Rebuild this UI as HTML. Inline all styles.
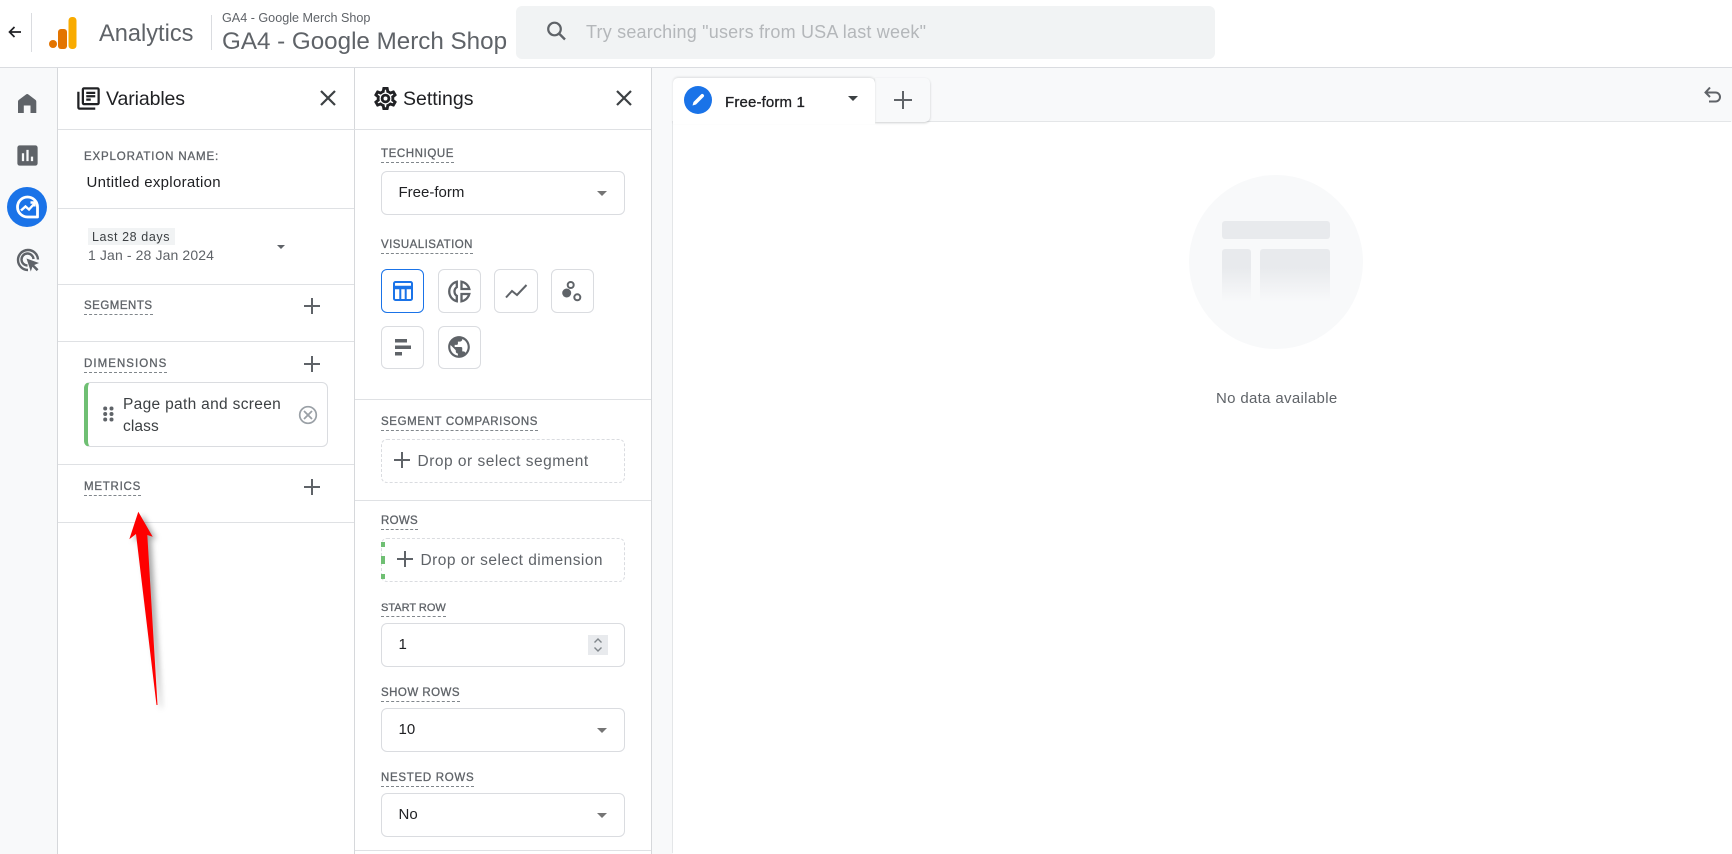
<!DOCTYPE html>
<html lang="en"><head><meta charset="utf-8"><title>Analytics</title>
<style>
html,body{margin:0;padding:0;width:1732px;height:854px;overflow:hidden;background:#fff;font-family:"Liberation Sans",Arial,sans-serif}
.a{position:absolute}
.t{position:absolute;white-space:nowrap;line-height:20px;height:20px}
.l{position:absolute;white-space:nowrap;font-size:11.5px;line-height:14px;height:14px;padding-bottom:1px;color:#5f6368;border-bottom:1px dashed #80868b;-webkit-text-stroke:.3px #5f6368}
.h{position:absolute;height:1px;background:#dfe1e4}
.v{position:absolute;width:1px;background:#d6d8db}
.box{position:absolute;box-sizing:border-box;border:1px solid #dadce0;border-radius:6px;background:#fff}
.dash{border:1px dashed #dadce0}
.sel{font-size:15px;color:#202124}
.ar{position:absolute;width:0;height:0;border-left:5.5px solid transparent;border-right:5.5px solid transparent;border-top:5.5px solid #757575}
svg{position:absolute;display:block}
</style></head><body>

<!-- Header -->
<svg style="left:6px;top:23px" width="18" height="18" viewBox="0 0 18 18"><path d="M15 9H4M8.500 4 3.500 9l5 5" fill="none" stroke="#202124" stroke-width="1.700"/></svg>
<div class="v" style="left:31px;top:13px;height:39px;background:#dadce0"></div>
<svg style="left:49px;top:17px" width="28" height="32" viewBox="0 0 28 32"><circle cx="4" cy="27" r="4" fill="#e37400"/><rect x="9" y="12" width="9" height="20" rx="3" fill="#e37400"/><rect x="19.500" y="0" width="8" height="32" rx="3.500" fill="#f9ab00"/></svg>
<div class="t" style="left:99px;top:24px;font-size:23.600px;color:#5f6368">Analytics</div>
<div class="v" style="left:211px;top:15px;height:35px;background:#dadce0"></div>
<div class="t" style="left:222px;top:8px;font-size:12.600px;color:#5f6368">GA4 - Google Merch Shop</div>
<div class="t" style="left:222px;top:32px;font-size:24.200px;color:#5f6368">GA4 - Google Merch Shop</div>
<div class="a" style="left:516px;top:6px;width:699px;height:53px;background:#f1f3f4;border-radius:6px"></div>
<svg style="left:544px;top:19px" width="24" height="24" viewBox="0 0 24 24"><circle cx="10.500" cy="10" r="6.300" fill="none" stroke="#5f6368" stroke-width="2.200"/><path d="M15 14.500l6 6" stroke="#5f6368" stroke-width="2.400"/></svg>
<div class="t" style="left:586px;top:22px;font-size:18px;letter-spacing:.2px;color:#b4b7ba">Try searching "users from USA last week"</div>
<div class="h" style="left:0;top:67px;width:1732px;height:1px;background:#dadce0"></div>

<!-- Rail -->
<div class="a" style="left:0;top:68px;width:57px;height:786px;background:#f8f9fa"></div>
<div class="v" style="left:57px;top:68px;height:786px"></div>
<svg style="left:0;top:68px" width="57" height="60" viewBox="0 68 57 60"><path fill="#5f6368" d="M18 113V101.500Q18 100.500 19 99.800L26 94.500Q27.200 93.600 28.400 94.500L35.300 99.800Q36.300 100.500 36.300 101.500V113H30.500V105.500H23.800V113z"/></svg>
<svg style="left:14px;top:142px" width="27" height="27" viewBox="0 0 24 24"><path fill="#5f6368" d="M19 3H5c-1.100 0-2 .9-2 2v14c0 1.100.9 2 2 2h14c1.100 0 2-.9 2-2V5c0-1.100-.9-2-2-2zM9 17H7v-7h2v7zm4 0h-2V7h2v10zm4 0h-2v-4h2v4z"/></svg>
<div class="a" style="left:7px;top:187px;width:40px;height:40px;border-radius:50%;background:#1a73e8"></div>
<svg style="left:7px;top:187px" width="40" height="40" viewBox="0 0 40 40"><path d="M30.500 20a10 10 0 1 0-10 10H30.500z" fill="none" stroke="#fff" stroke-width="2.800" stroke-linejoin="round"/><path d="M14 23.500l4.500-4 3.500 3 5-5.500M23.500 15.500H27.500V19.500" fill="none" stroke="#fff" stroke-width="2.400"/></svg>
<svg style="left:16px;top:248px" width="24" height="24" viewBox="0 0 24 24"><path d="M12 22A10 10 0 1 1 22 11.500" fill="none" stroke="#5f6368" stroke-width="2.400"/><path d="M11.500 17.500A6 6 0 1 1 17.500 11" fill="none" stroke="#5f6368" stroke-width="2.400"/><path d="M10.500 10.500 23 15l-4.800 2 4.300 4.300-1.800 1.800-4.300-4.300-1.600 4.700z" fill="#5f6368"/></svg>

<!-- Panels -->
<div class="v" style="left:354px;top:68px;height:786px"></div>
<div class="v" style="left:651px;top:68px;height:786px"></div>

<!-- Variables -->
<svg style="left:75px;top:85px" width="27" height="27" viewBox="0 0 24 24"><path fill="#202124" d="M4 6H2v14c0 1.100.9 2 2 2h14v-2H4V6zm16-4H8c-1.100 0-2 .9-2 2v12c0 1.100.9 2 2 2h12c1.100 0 2-.9 2-2V4c0-1.100-.9-2-2-2zm0 14H8V4h12v12zM10 9h8v2h-8zm0 3h4v2h-4zm0-6h8v2h-8z"/></svg>
<div class="t" style="left:106px;top:89px;font-size:19.500px;letter-spacing:-.1px;color:#202124">Variables</div>
<svg style="left:320px;top:90px" width="16" height="16" viewBox="0 0 16 16"><path d="M1 1l14 14M15 1 1 15" stroke="#3c4043" stroke-width="2.200"/></svg>
<div class="h" style="left:58px;top:129px;width:593px"></div>
<div class="t" style="left:84px;top:147px;font-size:11.500px;letter-spacing:.85px;color:#5f6368;-webkit-text-stroke:.3px #5f6368">EXPLORATION NAME:</div>
<div class="t" style="left:86.500px;top:173px;font-size:15px;letter-spacing:.3px;color:#202124">Untitled exploration</div>
<div class="h" style="left:58px;top:208px;width:296px"></div>
<div class="a" style="left:88px;top:228px;width:87px;height:17px;background:#f1f3f4"></div>
<div class="t" style="left:92px;top:227px;font-size:12.500px;letter-spacing:.6px;color:#3c4043">Last 28 days</div>
<div class="t" style="left:88px;top:245px;font-size:14px;letter-spacing:.12px;color:#5f6368">1 Jan - 28 Jan 2024</div>
<div class="ar" style="left:277px;top:245px;border-left-width:4.500px;border-right-width:4.500px;border-top-width:4.500px;border-top-color:#5f6368"></div>
<div class="h" style="left:58px;top:284px;width:296px"></div>
<div class="l" style="left:84px;top:299px;letter-spacing:.5px">SEGMENTS</div>
<svg style="left:304px;top:298px" width="16" height="16" viewBox="0 0 16 16"><path d="M8 0v16M0 8h16" stroke="#5f6368" stroke-width="2"/></svg>
<div class="h" style="left:58px;top:341px;width:296px"></div>
<div class="l" style="left:84px;top:357px;letter-spacing:1.05px">DIMENSIONS</div>
<svg style="left:304px;top:356px" width="16" height="16" viewBox="0 0 16 16"><path d="M8 0v16M0 8h16" stroke="#5f6368" stroke-width="2"/></svg>
<div class="box" style="left:84px;top:382px;width:244px;height:65px;border-left:4px solid #6fbf73"></div>
<svg style="left:103px;top:406px" width="11" height="16" viewBox="0 0 11 16" fill="#5f6368"><circle cx="2.200" cy="2.500" r="2"/><circle cx="8.500" cy="2.500" r="2"/><circle cx="2.200" cy="8" r="2"/><circle cx="8.500" cy="8" r="2"/><circle cx="2.200" cy="13.500" r="2"/><circle cx="8.500" cy="13.500" r="2"/></svg>
<div class="t" style="left:123px;top:395px;font-size:15.500px;letter-spacing:.32px;color:#3c4043">Page path and screen</div>
<div class="t" style="left:123px;top:417px;font-size:15.500px;letter-spacing:.1px;color:#3c4043">class</div>
<svg style="left:298px;top:405px" width="20" height="20" viewBox="0 0 20 20"><circle cx="10" cy="10" r="8.300" fill="none" stroke="#9aa0a6" stroke-width="1.700"/><path d="M6 6l8 8M14 6l-8 8" stroke="#9aa0a6" stroke-width="1.800"/></svg>
<div class="h" style="left:58px;top:464px;width:296px"></div>
<div class="l" style="left:84px;top:480px;letter-spacing:.75px">METRICS</div>
<svg style="left:304px;top:479px" width="16" height="16" viewBox="0 0 16 16"><path d="M8 0v16M0 8h16" stroke="#5f6368" stroke-width="2"/></svg>
<div class="h" style="left:58px;top:522px;width:296px"></div>

<!-- Settings -->
<svg style="left:372px;top:85px" width="27" height="27" viewBox="0 0 24 24"><path fill="#202124" stroke="#202124" stroke-width=".5" d="M19.430 12.980c.04-.32.07-.64.07-.98 0-.34-.03-.66-.07-.98l2.110-1.650c.19-.15.24-.42.12-.64l-2-3.460c-.09-.16-.26-.25-.44-.25-.06 0-.12.01-.17.03l-2.490 1c-.52-.4-1.080-.73-1.690-.98l-.38-2.650C14.460 2.180 14.250 2 14 2h-4c-.25 0-.46.18-.49.42l-.38 2.650c-.61.25-1.170.59-1.690.98l-2.490-1c-.06-.02-.12-.03-.18-.03-.17 0-.34.09-.43.25l-2 3.460c-.13.22-.07.49.12.64l2.110 1.650c-.04.32-.07.65-.07.98 0 .33.03.66.07.98l-2.110 1.650c-.19.15-.24.42-.12.64l2 3.460c.09.16.26.25.44.25.06 0 .12-.01.17-.03l2.490-1c.52.4 1.080.73 1.690.98l.38 2.650c.03.24.24.42.49.42h4c.25 0 .46-.18.49-.42l.38-2.650c.61-.25 1.170-.59 1.690-.98l2.490 1c.06.02.12.03.18.03.17 0 .34-.09.43-.25l2-3.460c.12-.22.07-.49-.12-.64l-2.110-1.650zm-1.980-1.710c.04.31.05.52.05.73 0 .21-.02.43-.05.73l-.14 1.130.89.7 1.080.84-.7 1.210-1.270-.51-1.040-.42-.9.68c-.43.32-.84.56-1.250.73l-1.060.43-.16 1.130-.2 1.350h-1.400l-.19-1.350-.16-1.130-1.060-.43c-.43-.18-.83-.41-1.230-.71l-.91-.7-1.060.43-1.270.51-.7-1.210 1.080-.84.89-.7-.14-1.130c-.03-.31-.05-.54-.05-.74s.02-.43.05-.73l.14-1.130-.89-.7-1.080-.84.7-1.210 1.270.51 1.040.42.9-.68c.43-.32.84-.56 1.250-.73l1.060-.43.16-1.130.2-1.350h1.390l.19 1.350.16 1.130 1.060.43c.43.18.83.41 1.230.71l.91.7 1.060-.43 1.270-.51.7 1.210-1.070.85-.89.7.14 1.130zM12 8c-2.210 0-4 1.790-4 4s1.790 4 4 4 4-1.790 4-4-1.790-4-4-4zm0 6c-1.100 0-2-.9-2-2s.9-2 2-2 2 .9 2 2-.9 2-2 2z"/></svg>
<div class="t" style="left:403px;top:89px;font-size:19.500px;color:#202124">Settings</div>
<svg style="left:616px;top:90px" width="16" height="16" viewBox="0 0 16 16"><path d="M1 1l14 14M15 1 1 15" stroke="#3c4043" stroke-width="2.200"/></svg>

<div class="l" style="left:381px;top:147px;letter-spacing:.59px">TECHNIQUE</div>
<div class="box" style="left:381px;top:171px;width:244px;height:44px"></div>
<div class="t sel" style="left:398.500px;top:183px">Free-form</div>
<div class="ar" style="left:596.500px;top:190.500px"></div>

<div class="l" style="left:381px;top:238px;letter-spacing:.45px">VISUALISATION</div>
<div class="box" style="left:381px;top:269px;width:43px;height:44px;border-color:#1a73e8"></div>
<div class="box" style="left:438px;top:269px;width:43px;height:44px"></div>
<div class="box" style="left:494px;top:269px;width:44px;height:44px"></div>
<div class="box" style="left:551px;top:269px;width:43px;height:44px"></div>
<div class="box" style="left:381px;top:326px;width:43px;height:43px"></div>
<div class="box" style="left:438px;top:326px;width:43px;height:43px"></div>
<svg style="left:393px;top:281px" width="20" height="20" viewBox="0 0 20 20"><rect x="1" y="1" width="18" height="18" rx="1.500" fill="none" stroke="#1a73e8" stroke-width="2"/><path d="M1 6.500h18" stroke="#1a73e8" stroke-width="3.500"/><path d="M7.300 7v12M12.700 7v12" stroke="#1a73e8" stroke-width="2"/></svg>
<svg style="left:448px;top:280px" width="23" height="23" viewBox="0 0 23 23" fill="none" stroke="#5f6368" stroke-width="2.300"><path d="M8.800 1.800A10 10 0 0 0 8.800 21.200V15.800C7.200 14.800 6.500 13.200 6.500 11.500S7.200 8.200 8.800 7.200z"/><path d="M13.500 1.700V9H21.300A10 10 0 0 0 13.500 1.700z"/><path d="M13.500 21.300V14H21.300A10 10 0 0 1 13.500 21.300z"/></svg>
<svg style="left:505px;top:284px" width="23" height="15" viewBox="0 0 23 15"><path d="M1 13.500l6-6.500 5 4L21.500 1" fill="none" stroke="#5f6368" stroke-width="2"/></svg>
<svg style="left:561px;top:279px" width="24" height="24" viewBox="0 0 24 24" fill="none" stroke="#5f6368" stroke-width="2"><circle cx="9.700" cy="6" r="3"/><circle cx="16.300" cy="18.300" r="3"/><circle cx="5.700" cy="14" r="4.500" fill="#5f6368" stroke="none"/></svg>
<svg style="left:394px;top:339px" width="18" height="17" viewBox="0 0 18 17" fill="#5f6368"><rect x="1" y="0" width="12" height="3.500"/><rect x="1" y="6.500" width="16" height="3.500"/><rect x="1" y="13" width="7" height="3.500"/></svg>
<svg style="left:446px;top:334px" width="26" height="26" viewBox="0 0 24 24"><path fill="#5f6368" d="M12 2C6.480 2 2 6.480 2 12s4.480 10 10 10 10-4.480 10-10S17.520 2 12 2zm-1 17.930c-3.950-.49-7-3.850-7-7.930 0-.62.08-1.210.21-1.790L9 15v1c0 1.100.9 2 2 2v1.930zm6.900-2.540c-.26-.81-1-1.390-1.900-1.390h-1v-3c0-.55-.45-1-1-1H8v-2h2c.55 0 1-.45 1-1V7h2c1.100 0 2-.9 2-2v-.41c2.930 1.190 5 4.060 5 7.410 0 2.080-.8 3.970-2.100 5.390z"/></svg>
<div class="h" style="left:355px;top:399px;width:296px"></div>

<div class="l" style="left:381px;top:415px;letter-spacing:.62px">SEGMENT COMPARISONS</div>
<div class="box dash" style="left:381px;top:439px;width:244px;height:44px"></div>
<svg style="left:394px;top:452px" width="16" height="16" viewBox="0 0 16 16"><path d="M8 0v16M0 8h16" stroke="#5f6368" stroke-width="2"/></svg>
<div class="t" style="left:417.500px;top:452px;font-size:15.500px;letter-spacing:.5px;color:#5f6368">Drop or select segment</div>
<div class="h" style="left:355px;top:500px;width:296px"></div>

<div class="l" style="left:381px;top:514px;letter-spacing:.3px">ROWS</div>
<div class="box dash" style="left:381px;top:538px;width:244px;height:44px"></div>
<div class="a" style="left:381px;top:542px;width:4px;height:5px;background:#6fbf73"></div>
<div class="a" style="left:381px;top:556px;width:4px;height:8px;background:#6fbf73"></div>
<div class="a" style="left:381px;top:574px;width:4px;height:5px;background:#6fbf73"></div>
<svg style="left:397px;top:551px" width="16" height="16" viewBox="0 0 16 16"><path d="M8 0v16M0 8h16" stroke="#5f6368" stroke-width="2"/></svg>
<div class="t" style="left:420.500px;top:551px;font-size:15.500px;letter-spacing:.46px;color:#5f6368">Drop or select dimension</div>

<div class="l" style="left:381px;top:601px;font-size:11px;letter-spacing:0">START ROW</div>
<div class="box" style="left:381px;top:623px;width:244px;height:44px"></div>
<div class="t sel" style="left:398.500px;top:635px">1</div>
<div class="a" style="left:588px;top:635px;width:20px;height:20px;background:#e8eaed"></div>
<svg style="left:588px;top:635px" width="20" height="20" viewBox="0 0 20 20" fill="none" stroke="#80868b" stroke-width="1.400"><path d="M6.500 7.500 10 4l3.500 3.500M6.500 12.500 10 16l3.500-3.500"/></svg>

<div class="l" style="left:381px;top:686px;letter-spacing:.47px">SHOW ROWS</div>
<div class="box" style="left:381px;top:708px;width:244px;height:44px"></div>
<div class="t sel" style="left:398.500px;top:720px">10</div>
<div class="ar" style="left:596.500px;top:727.500px"></div>

<div class="l" style="left:381px;top:771px;letter-spacing:.7px">NESTED ROWS</div>
<div class="box" style="left:381px;top:793px;width:244px;height:44px"></div>
<div class="t sel" style="left:398.500px;top:805px">No</div>
<div class="ar" style="left:596.500px;top:812.500px"></div>
<div class="h" style="left:355px;top:850px;width:296px"></div>

<!-- Right area -->
<div class="a" style="left:652px;top:68px;width:1080px;height:786px;background:#f8f9fa"></div>
<div class="a" style="left:673px;top:122px;width:1059px;height:732px;background:#fff;box-shadow:-1px -1px 0 #e4e6e8"></div>
<div class="a" style="left:875px;top:78px;width:55px;height:44px;background:#f8f9fa;border-radius:0 5px 5px 0;box-shadow:0 1px 2px rgba(60,64,67,.25)"></div>
<div class="a" style="left:673px;top:78px;width:202px;height:46px;background:#fff;border-radius:5px 5px 0 0;box-shadow:0 -1px 2px rgba(60,64,67,.14)"></div>
<div class="a" style="left:684px;top:86px;width:28px;height:28px;border-radius:50%;background:#1a73e8"></div>
<svg style="left:690px;top:92px" width="16" height="16" viewBox="0 0 16 16"><path d="M2.500 13.500 3.500 10 11 2.500a1.500 1.500 0 0 1 2.500 2.500L6 12.500z" fill="#fff"/></svg>
<div class="t" style="left:725px;top:93px;font-size:15px;letter-spacing:.15px;color:#202124;-webkit-text-stroke:.3px #202124">Free-form 1</div>
<div class="ar" style="left:848px;top:95.500px;border-top-color:#3c4043"></div>
<svg style="left:893.500px;top:91px" width="18" height="18" viewBox="0 0 18 18"><path d="M9 0v18M0 9h18" stroke="#5f6368" stroke-width="2"/></svg>
<svg style="left:1703px;top:86px" width="20" height="18" viewBox="0 0 20 18"><path d="M7 1.500 2.500 6.500 7 11M2.500 6.500H12.500a4.500 4.500 0 0 1 0 9H6" fill="none" stroke="#5f6368" stroke-width="2"/></svg>

<!-- Empty state -->
<div class="a" style="left:1189px;top:175px;width:174px;height:174px;border-radius:50%;background:#f8f9fa"></div>
<div class="a" style="left:1222px;top:221px;width:108px;height:18px;border-radius:3px;background:#e8eaed"></div>
<div class="a" style="left:1222px;top:249px;width:29px;height:53px;border-radius:3px 3px 0 0;background:linear-gradient(#e8eaed 0,#e8eaed 35%,#f8f9fa 100%)"></div>
<div class="a" style="left:1260px;top:249px;width:70px;height:53px;border-radius:3px 3px 0 0;background:linear-gradient(#e8eaed 0,#e8eaed 35%,#f8f9fa 100%)"></div>
<div class="t" style="left:1216px;top:389px;width:120px;text-align:center;font-size:15px;letter-spacing:.33px;color:#5f6368">No data available</div>

<!-- Red arrow -->
<svg style="left:120px;top:505px;filter:drop-shadow(4px 3px 3px rgba(0,0,0,.35))" width="60" height="210" viewBox="120 505 60 210"><path d="M138.300 511.700 152.700 536.700 147.300 535 157.500 705 156.500 705 136 534 129.300 539.300z" fill="#fe0000"/></svg>

</body></html>
